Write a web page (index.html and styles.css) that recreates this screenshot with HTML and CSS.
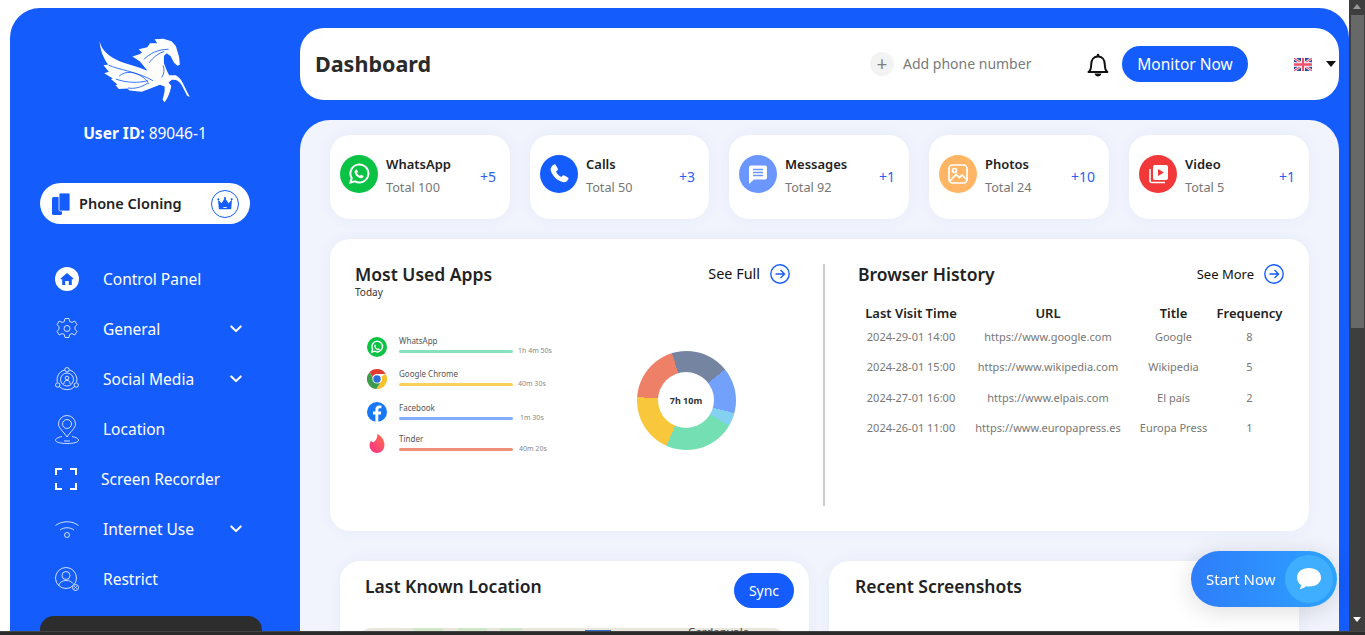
FILE: index.html
```html
<!DOCTYPE html>
<html lang="en">
<head>
<meta charset="utf-8">
<title>Dashboard</title>
<link rel="stylesheet" href="styles.css">
</head>
<body>
<div class="frame">
  <aside class="sidebar">
    <svg class="logo" viewBox="177 54 273 196" aria-label="Pegasus logo">
      <path fill="#fff" d="M178 62C184 92 205 108 240 125 275 138 305 142 335 160L360 170V195L335 205 305 216 268 212 262 206 236 208 226 196 232 194 212 178 218 176 192 160 206 156 190 136 204 134C188 112 180 90 178 62Z"/>
      <path fill="#fff" d="M277 110L300 102 306 98 296 88 322 82 330 70 352 70 344 58 370 56 395 64 408 78 413 95 418 112 420 135 413 138 402 128 392 108 380 100 372 108 372 130 382 155 388 166H408C420 172 428 185 434 200L450 232 442 228 425 195C418 183 408 178 396 180L386 188 394 198C392 215 384 235 374 248L368 240C372 225 376 212 374 200L360 195H340L320 150 300 125Z"/>
      <g fill="none" stroke="#155cfd" stroke-width="2.600" stroke-linecap="round">
        <path d="M206 136C235 150 290 155 338 182"/>
        <path d="M238 168C255 152 285 155 308 172 320 180 325 188 325 192"/>
        <path d="M228 178C260 190 295 190 322 183"/>
        <path d="M265 205C285 208 305 202 322 191"/>
        <path d="M312 118C330 100 355 88 385 88"/>
        <path d="M328 128C340 112 355 100 372 95"/>
        <path d="M366 172C373 160 374 150 370 138"/>
      </g>
    </svg>
    <p class="user"><b>User ID:</b> 89046-1</p>
    <div class="pill">
      <svg class="pill-phones" viewBox="0 0 18 22"><rect x="0" y="4" width="10" height="18" rx="1.500" fill="#155cfd"/><rect x="7" y="0" width="11" height="18" rx="1.500" fill="#155cfd" stroke="#fff" stroke-width=".8"/></svg>
      <span class="pill-text">Phone Cloning</span>
      <span class="crown"><svg viewBox="0 0 18 16"><path fill="#155cfd" d="M1 3l4 4 4-6 4 6 4-4-1 11H2z"/><circle cx="1.400" cy="2.600" r="1.200" fill="#155cfd"/><circle cx="9" cy="1.200" r="1.200" fill="#155cfd"/><circle cx="16.600" cy="2.600" r="1.200" fill="#155cfd"/><path stroke="#fff" d="M7 12h4"/></svg></span>
    </div>
    <nav class="nav">
      <a class="nav-item"><svg class="nav-icon" viewBox="0 0 24 24"><circle cx="12" cy="12" r="12" fill="#fff"/><path fill="#155cfd" d="M12 6l6.500 5.600-.9 1-.8-.6V18h-3v-4h-3.600v4h-3v-6l-.8.600-.9-1z"/></svg><span>Control Panel</span></a>
      <a class="nav-item"><svg class="nav-icon line" viewBox="0 0 24 24"><path d="M10 1.500h4l.7 3 2.300 1 2.700-1.500 2.300 3.500-2 2.300v2.400l2 2.300-2.300 3.500-2.700-1.500-2.300 1-.7 3h-4l-.7-3-2.300-1-2.700 1.500-2.300-3.500 2-2.300v-2.400l-2-2.300 2.300-3.500 2.700 1.500 2.300-1z" stroke-linejoin="round"/><circle cx="12" cy="11.500" r="3"/></svg><span>General</span><svg class="chev" viewBox="0 0 14 9"><path d="M1.500 1.500L7 7l5.500-5.500"/></svg></a>
      <a class="nav-item"><svg class="nav-icon line" viewBox="0 0 24 24"><circle cx="12" cy="12.500" r="6.500"/><circle cx="12" cy="11" r="1.800"/><path d="M8.800 17c.3-2.600 1.500-3.700 3.200-3.700s2.900 1.100 3.200 3.700"/><path d="M9.700 2.900A10 10 0 0 0 2.300 15M14.300 2.900A10 10 0 0 1 21.700 15M4.200 19.500a11 11 0 0 0 15.600 0"/><circle cx="12" cy="2.700" r="2.200"/><circle cx="2.700" cy="18" r="2.200"/><circle cx="21.300" cy="18" r="2.200"/></svg><span>Social Media</span><svg class="chev" viewBox="0 0 14 9"><path d="M1.500 1.500L7 7l5.500-5.500"/></svg></a>
      <a class="nav-item"><svg class="nav-icon tall line" viewBox="0 0 24 29"><path d="M12 22C8 16 3.500 13 3.500 9a8.500 8.500 0 0 1 17 0c0 4-4.500 7-8.500 13z"/><circle cx="12" cy="9" r="4.500"/><path d="M7 21.500C3 22.300.5 23.600.5 25.200.5 27.300 5.500 28.500 12 28.500s11.500-1.200 11.500-3.300c0-1.600-2.500-2.900-6.500-3.700M9 26h6"/></svg><span>Location</span></a>
      <a class="nav-item tight"><svg class="nav-icon rec" viewBox="0 0 22 22"><path d="M1 7V1h6M15 1h6v6M21 15v6h-6M7 21H1v-6"/></svg><span>Screen Recorder</span></a>
      <a class="nav-item"><svg class="nav-icon line" viewBox="0 0 24 24"><path d="M.5 8.500c6.500-5 16.500-5 23 0M5 13c4-3 10-3 14 0"/><circle cx="12" cy="18" r="2.500"/></svg><span>Internet Use</span><svg class="chev" viewBox="0 0 14 9"><path d="M1.500 1.500L7 7l5.500-5.500"/></svg></a>
      <a class="nav-item"><svg class="nav-icon line" viewBox="0 0 24 24"><circle cx="11" cy="11" r="10.500"/><circle cx="11" cy="8.500" r="4"/><path d="M3.500 18.500c1.500-3.500 4-5 7.500-5s5.500 1 7 3"/><circle cx="20.500" cy="20.500" r="3" fill="#155cfd"/><path d="M19.300 19.300l2.400 2.400M21.700 19.300l-2.400 2.400"/></svg><span>Restrict</span></a>
    </nav>
    <div class="dark-card"></div>
  </aside>

  <main class="main">
    <header class="topbar">
      <h1>Dashboard</h1>
      <div class="add"><span class="add-plus">+</span><span class="add-text">Add phone number</span></div>
      <svg class="bell" viewBox="0 0 22 25"><path fill="none" stroke="#111" stroke-width="2" stroke-linejoin="round" d="M1.500 20c2-1.500 2.700-3.500 2.700-7.500C4.200 7.500 7 4.500 11 4.500s6.800 3 6.800 8c0 4 .7 6 2.700 7.500z"/><path fill="#111" d="M9.700 3a1.300 1.300 0 0 1 2.600 0v2H9.700zM7.500 21.500h7c-.5 2-2 3-3.500 3s-3-1-3.500-3z"/></svg>
      <button class="monitor">Monitor Now</button>
      <svg class="flag" viewBox="0 0 18 12" preserveAspectRatio="none"><rect width="18" height="12" fill="#2a4f9e"/><path stroke="#fff" stroke-width="2.400" d="M0 0l18 12M18 0L0 12"/><path stroke="#f0506e" stroke-width="1" d="M0 0l18 12M18 0L0 12"/><path stroke="#fff" stroke-width="4" d="M9 0v12M0 6h18"/><path stroke="#f0506e" stroke-width="2.200" d="M9 0v12M0 6h18"/></svg>
      <span class="caret"></span>
    </header>

    <section class="panel">
      <div class="stats">
        <div class="stat"><span class="stat-ic green"><svg viewBox="0 0 24 24"><path fill="none" stroke="#fff" stroke-width="2" d="M3.500 20.500l1.200-4.400A9 9 0 1 1 8 19.300z"/><path fill="#fff" d="M8.800 7.700c.4-.4 1-.4 1.200.1l.8 1.700c.1.300 0 .6-.2.800l-.6.700c.6 1.300 1.700 2.300 3 2.900l.7-.8c.2-.2.500-.3.800-.2l1.700.8c.4.200.5.700.3 1.100-.6 1.200-1.900 1.700-3.100 1.400-3-.8-5.100-2.900-5.800-5.600-.3-1 .2-2.100 1.200-2.900z"/></svg></span><div class="stat-text"><b>WhatsApp</b><small>Total 100</small></div><em>+5</em></div>
        <div class="stat"><span class="stat-ic blue"><svg viewBox="0 0 24 24"><path fill="#fff" d="M7.200 2.500c.6-.3 1.300-.1 1.600.5l2 3.700c.3.500.2 1.100-.2 1.500L9 9.600c.8 2.100 3.100 4.700 5.300 5.500l1.500-1.500c.4-.4 1-.5 1.500-.2l3.600 2c.6.300.8 1 .5 1.600-1 2.400-3.300 3.900-5.800 3.100C9.800 18.400 5.600 14 3.900 9 3.100 6.300 4.800 3.600 7.200 2.500z"/></svg></span><div class="stat-text"><b>Calls</b><small>Total 50</small></div><em>+3</em></div>
        <div class="stat"><span class="stat-ic periw"><svg viewBox="0 0 24 24"><path fill="#fff" d="M5 3.500h14A2 2 0 0 1 21 5.500v10a2 2 0 0 1-2 2H8l-5 4.500v-16.500a2 2 0 0 1 2-2z"/><path stroke="#6b96fd" stroke-width="1.500" d="M7 7.500h10M7 10.500h10M7 13.500h10"/></svg></span><div class="stat-text"><b>Messages</b><small>Total 92</small></div><em>+1</em></div>
        <div class="stat"><span class="stat-ic orange"><svg viewBox="0 0 24 24" fill="none" stroke="#fff" stroke-width="1.700"><rect x="3" y="3" width="18" height="18" rx="3.500"/><circle cx="8.500" cy="8.500" r="2"/><path d="M4 19l6-6.500 3.500 3 2.500-2.500 4.500 4.500"/></svg></span><div class="stat-text"><b>Photos</b><small>Total 24</small></div><em>+10</em></div>
        <div class="stat"><span class="stat-ic red"><svg viewBox="0 0 24 24"><rect x="7" y="3" width="15" height="15" rx="2" fill="#fff"/><path fill="#f23838" d="M12 7l6 3.500-6 3.500z"/><path fill="none" stroke="#fff" stroke-width="1.600" d="M4 7v11.500a2 2 0 0 0 2 2h13"/></svg></span><div class="stat-text"><b>Video</b><small>Total 5</small></div><em>+1</em></div>
      </div>

      <div class="usage">
        <div class="apps">
          <div class="card-head">
            <div><h2>Most Used Apps</h2><p class="today">Today</p></div>
            <a class="see full"><span>See Full</span><svg viewBox="0 0 20 20"><circle cx="10" cy="10" r="9.200"/><path d="M5.500 10h9M10.500 6l4 4-4 4"/></svg></a>
          </div>
          <div class="apps-body">
            <ul class="applist">
              <li><svg viewBox="0 0 20 20"><circle cx="10" cy="10" r="10" fill="#0ac243"/><path fill="none" stroke="#fff" stroke-width="1.400" d="M4.700 15.300l.9-3.100a5.300 5.300 0 1 1 2 2z"/><path fill="#fff" d="M8 7.300l1 1.800-.6.700c.5 1 1.200 1.600 2.200 2l.7-.6 1.700 1c-.6 1-1.500 1.200-2.600.800-1.500-.6-2.500-1.600-3-3-.3-1 0-2 .6-2.700z"/></svg><div class="app-bar"><span>WhatsApp</span><i class="mint"></i></div><time>1h 4m 50s</time></li>
              <li class="chrome"><svg viewBox="0 0 20 20"><path fill="#e33b2e" d="M10 0a10 10 0 0 1 8.700 5H10a5 5 0 0 0-4.500 2.900L2.600 3.300A10 10 0 0 1 10 0z"/><path fill="#fbc02d" d="M18.700 5A10 10 0 0 1 9.300 20l3.900-6.300A5 5 0 0 0 14.300 7.500z"/><path fill="#3c9b4c" d="M2.600 3.300l3.900 7a5 5 0 0 0 6.700 3.400L9.300 20A10 10 0 0 1 2.600 3.300z"/><circle cx="10" cy="10" r="4.600" fill="#fff"/><circle cx="10" cy="10" r="3.700" fill="#2a6fdb"/></svg><div class="app-bar"><span>Google Chrome</span><i class="yellow"></i></div><time>40m 30s</time></li>
              <li class="fb"><svg viewBox="0 0 20 20"><circle cx="10" cy="10" r="10" fill="#1877f2"/><path fill="#fff" d="M11.300 20v-7.500h2.500l.5-3h-3V7.700c0-.9.400-1.500 1.600-1.500h1.500V3.600c-.6-.1-1.400-.2-2.200-.2-2.400 0-3.800 1.400-3.800 3.900v2.200H6v3h2.400V20z"/></svg><div class="app-bar"><span>Facebook</span><i class="sky"></i></div><time class="shift">1m 30s</time></li>
              <li class="tinder"><svg viewBox="0 0 20 20"><defs><linearGradient id="tg" x1="0" y1="1" x2="1" y2="0"><stop offset="0" stop-color="#fd2f8c"/><stop offset="1" stop-color="#ff6d4a"/></linearGradient></defs><path fill="url(#tg)" d="M6.500 8.300C9.300 6.400 10.500 3.500 10.300 0c3.800 1.500 7.200 6 7.200 11.200A7.700 7.700 0 0 1 10 19a7.500 7.500 0 0 1-7.500-7.600c0-2 .7-3.700 2-5 0 1 .7 1.500 2 1.900z"/></svg><div class="app-bar"><span>Tinder</span><i class="coral"></i></div><time class="shift2">40m 20s</time></li>
            </ul>
            <div class="donut"><span>7h 10m</span></div>
          </div>
        </div>
        <div class="history">
          <div class="card-head hist-head">
            <h2>Browser History</h2>
            <a class="see more"><span>See More</span><svg viewBox="0 0 20 20"><circle cx="10" cy="10" r="9.200"/><path d="M5.500 10h9M10.500 6l4 4-4 4"/></svg></a>
          </div>
          <table>
            <thead><tr><th class="c1">Last Visit Time</th><th class="c2">URL</th><th class="c3">Title</th><th class="c4">Frequency</th></tr></thead>
            <tbody>
              <tr><td>2024-29-01 14:00</td><td>https://www.google.com</td><td>Google</td><td>8</td></tr>
              <tr><td>2024-28-01 15:00</td><td>https://www.wikipedia.com</td><td>Wikipedia</td><td>5</td></tr>
              <tr><td>2024-27-01 16:00</td><td>https://www.elpais.com</td><td>El país</td><td>2</td></tr>
              <tr><td>2024-26-01 11:00</td><td>https://www.europapress.es</td><td>Europa Press</td><td>1</td></tr>
            </tbody>
          </table>
        </div>
      </div>

      <div class="lower">
        <div class="lower-card">
          <div class="lower-head"><h2>Last Known Location</h2><button class="sync">Sync</button></div>
          <div class="map"><span class="map-label">Cerdanyola</span><span class="map-pin"></span></div>
        </div>
        <div class="lower-card"><div class="lower-head"><h2>Recent Screenshots</h2></div></div>
      </div>
    </section>
  </main>
</div>

<button class="start"><span>Start Now</span><span class="start-ic"><svg viewBox="0 0 26 24"><path fill="#fff" d="M13 1c6.800 0 12 3.800 12 9.500S19.800 19.500 13 19.500c-1 0-2 0-3-.2-1.500 1.300-3.700 2.600-6.500 3 1-1.300 1.500-2.800 1.500-4.300C2.700 16.500 1 13.800 1 10.500 1 4.800 6.200 1 13 1z"/></svg></span></button>
<div class="scrollbar"><span class="arrow up"></span><span class="thumb"></span><span class="arrow down"></span></div>
<div class="window-edge"></div>
</body>
</html>
```
FILE: styles.css
```css
* { box-sizing: border-box; }
html, body { margin: 0; height: 635px; overflow: hidden; background: #fff; }
body { font-family: "Noto Sans", "Open Sans", sans-serif; color: #222; }
h1, h2, p, ul { margin: 0; padding: 0; }
.frame { display: flex; width: 1339px; height: 627px; overflow: hidden; margin: 8px 0 0 10px; background: #155cfd; border-radius: 30px 30px 0 0; }

.sidebar { width: 290px; flex: none; display: flex; flex-direction: column; color: #fff; padding-top: 30px; }
.logo { width: 91px; height: 65px; display: block; margin-left: 89px; flex: none; }
.user { margin-top: 20px; text-align: center; font-size: 15.500px; line-height: 20px; width: 270px; }
.user b { font-weight: 700; }
.pill { margin: 40px 0 0 30px; width: 210px; height: 41px; flex: none; background: #fff; border-radius: 21px; display: flex; align-items: center; padding: 0 0 0 12px; color: #222; }
.pill-phones { width: 18px; height: 22px; flex: none; }
.pill-text { margin-left: 9px; font-size: 14.500px; font-weight: 600; flex: 1; white-space: nowrap; margin-bottom: 1px; }
.crown { width: 28px; height: 28px; border: 1.500px solid #155cfd; border-radius: 50%; margin-right: 11px; display: flex; align-items: center; justify-content: center; flex: none; }
.crown svg { width: 16px; height: 14px; }
.nav { margin-top: 30px; display: flex; flex-direction: column; flex: none; }
.nav-item { height: 50px; display: flex; align-items: center; padding-left: 45px; font-size: 15.500px; position: relative; white-space: nowrap; }
.nav-item span { margin-left: 24px; margin-bottom: 1px; }
.nav-icon { width: 24px; height: 24px; flex: none; }
.nav-icon.tall { height: 29px; }
.line { fill: none; stroke: #fff; stroke-width: .8; }
.rec { width: 22px; height: 22px; fill: none; stroke: #fff; stroke-width: 2; }
.nav-item.tight span { margin-left: 24px; }
.chev { position: absolute; left: 220px; top: 21px; width: 12px; height: 8px; fill: none; stroke: #fff; stroke-width: 2.400; stroke-linecap: round; stroke-linejoin: round; }
.dark-card { margin: 12px 0 0 30px; width: 222px; height: 100px; flex: none; background: #2d2d2d; border-radius: 14px; }

.main { width: 1039px; flex: none; padding-top: 20px; }
.topbar { height: 72px; background: #fff; border-radius: 24px; display: flex; align-items: center; padding-left: 15px; position: relative; }
.topbar h1 { font-size: 21.500px; font-weight: 700; color: #2a2a2a; width: 555px; margin-bottom: 2px; }
.add { display: flex; align-items: center; gap: 9px; font-size: 14px; color: #7a7a7a; width: 217px; white-space: nowrap; }
.add-text { padding-bottom: 2px; }
.add-plus { width: 24px; height: 24px; border-radius: 50%; background: #f3f3f3; display: flex; align-items: center; justify-content: center; font-size: 19px; color: #7f7f7f; line-height: 1; }
.bell { width: 22px; height: 25px; flex: none; }
.monitor { margin-left: 13px; width: 126px; height: 36px; border: 0; border-radius: 18px; background: #155cfd; color: #fff; font: 15.500px "Noto Sans", sans-serif; padding: 0; }
.flag { width: 18px; height: 13px; margin-left: 46px; flex: none; }
.caret { margin-left: 14px; border: 5px solid transparent; border-top: 6px solid #111; border-bottom: 0; }

.panel { margin-top: 20px; height: 560px; background: #f1f4fd; border-radius: 30px 30px 0 0; padding: 15px 30px 0; }
.stats { display: flex; gap: 20px; }
.stat { flex: none; width: 180px; height: 84px; background: #fff; border-radius: 20px; display: flex; align-items: flex-start; padding: 20px 14px 0 10px; box-shadow: 0 0 16px rgba(60, 80, 160, .05); }
.stat:nth-child(2) { width: 179px; }
.stat-ic { width: 38px; height: 38px; border-radius: 50%; display: flex; align-items: center; justify-content: center; flex: none; }
.stat-ic svg { width: 24px; height: 24px; }
.green { background: #0ac243; }
.blue { background: #155cfd; }
.periw { background: #6b96fd; }
.orange { background: #ffb564; }
.red { background: #f23838; }
.stat-text { margin-left: 8px; flex: 1; display: flex; flex-direction: column; gap: 5px; }
.stat-text b { font-size: 13px; font-weight: 600; line-height: 18px; color: #222; }
.stat-text small { font-size: 12.700px; line-height: 18px; color: #777; }
.stat em { font-style: normal; font-size: 14px; line-height: 18px; color: #2a5ff5; margin-top: 13px; }

.usage { margin-top: 20px; height: 292px; background: #fff; border-radius: 20px; display: flex; padding: 24px 25px 25px; box-shadow: 0 0 16px rgba(60, 80, 160, .05); }
.apps { width: 470px; flex: none; border-right: 2px solid #ccc; padding-right: 33px; margin-top: 1px; }
.apps .card-head { margin-top: -1px; }
.history { flex: 1; padding-left: 33px; }
.card-head { display: flex; justify-content: space-between; }
h2 { font-size: 17.500px; font-weight: 600; line-height: 22px; color: #222; }
.today { font-size: 10px; line-height: 12px; color: #333; margin-top: 1px; }
.see { display: flex; align-items: center; gap: 10px; height: 22px; color: #111; }
.see.full { font-size: 14.400px; }
.see.more { font-size: 13px; }
.see span { margin-bottom: 1px; }
.see svg { width: 20px; height: 20px; fill: none; stroke: #155cfd; stroke-width: 1.400; }
.apps-body { display: flex; margin-top: 37px; padding-left: 12px; }
.applist { list-style: none; width: 269.500px; flex: none; }
.applist li { display: flex; align-items: flex-start; height: 33.400px; position: relative; }
.applist li.tinder { margin-top: -2px; }
.applist li > svg { width: 20px; height: 20px; flex: none; margin-top: 2px; }
.applist li.chrome > svg { margin-top: 1px; }
.applist li.fb > svg { margin-top: 0; }
.applist li.tinder > svg { margin-top: 1px; }
.app-bar { margin-left: 12px; width: 114px; flex: none; font-size: 8px; line-height: 12px; color: #555; }
.app-bar span { display: block; }
.app-bar i { display: block; height: 3px; margin-top: 3px; border-radius: 1.500px; }
.mint { background: #86e2bd; }
.yellow { background: #fad05a; }
.sky { background: #83adfb; }
.coral { background: #f09079; }
.applist time { font-size: 7px; color: #888; margin: 11px 0 0 5px; white-space: nowrap; }
.applist time.shift { margin-left: 7px; }
.applist time.shift2 { margin-left: 6px; }
.donut { width: 99px; height: 99px; border-radius: 50%; margin-top: 15.500px; position: relative; background: conic-gradient(from -17deg, #7585a1 0 68deg, #72a1fb 68deg 122deg, #84d0f0 122deg 137.500deg, #75dfb4 137.500deg 221deg, #f9c73c 221deg 291deg, #ee8068 291deg 360deg); display: flex; align-items: center; justify-content: center; }
.donut span { width: 56px; height: 56px; background: #fff; border-radius: 50%; display: flex; align-items: center; justify-content: center; font-size: 9px; font-weight: 700; color: #333; }

.hist-head { margin-bottom: 20px; }
table { border-collapse: collapse; table-layout: fixed; width: 426px; }
th { font-size: 13px; font-weight: 600; color: #222; line-height: 16.400px; padding: 0; white-space: nowrap; }
td { font-size: 11px; color: #777; text-align: center; height: 30.400px; padding: 0; white-space: nowrap; }
.c1 { width: 106px; }
.c2 { width: 168px; }
.c3 { width: 83px; }
.c4 { width: 69px; }

.lower { display: flex; gap: 20px; margin: 30px 10px 0; }
.lower-card { flex: none; width: 470px; height: 200px; background: #fff; border-radius: 20px; padding: 0 15px 0 26px; box-shadow: 0 0 16px rgba(60, 80, 160, .05); }
.lower-card:first-child { width: 469px; padding-left: 25px; }
.lower-head { display: flex; justify-content: space-between; height: 67px; padding-top: 14px; }
.lower-head h2 { line-height: 22px; }
.sync { width: 60px; height: 35px; margin-top: -2px; border: 0; border-radius: 18px; background: #155cfd; color: #fff; font: 14px "Noto Sans", sans-serif; padding: 0; }
.map { height: 120px; margin: 0 0 0 -5px; width: 424px; border-radius: 10px; position: relative; overflow: hidden; background: linear-gradient(90deg, #e9e6dd 0 53px, #cfe6c8 53px 83px, #e9e6dd 83px 98px, #cfe6c8 98px 127px, #e9e6dd 127px 140px, #cfe6c8 140px 162px, #e9e6dd 162px 424px); }
.map-label { position: absolute; left: 328px; top: -2px; font-size: 11.500px; line-height: 12px; color: #444; }
.map-pin { position: absolute; left: 225px; top: 2px; width: 26px; height: 10px; background: #2a6fdb; }

.start { position: fixed; left: 1191px; top: 551px; width: 146px; height: 56px; border: 0; border-radius: 28px; background: linear-gradient(90deg, #2f7dfb, #2da2ff); color: #fff; font: 15px "Noto Sans", sans-serif; display: flex; align-items: center; padding: 0 4px 0 15px; justify-content: space-between; box-shadow: 0 4px 24px rgba(0, 0, 0, .14); }
.start-ic { width: 48px; height: 48px; border-radius: 50%; background: #40aeff; display: flex; align-items: center; justify-content: center; }
.start-ic svg { width: 26px; height: 24px; }

.scrollbar { position: fixed; left: 1349px; top: 0; width: 16px; height: 635px; background: #3e3e3e; }
.thumb { position: absolute; left: 2px; top: 15px; width: 13px; height: 313px; background: #686868; }
.arrow { position: absolute; left: 4px; border: 4.500px solid transparent; }
.arrow.up { top: 4px; border-bottom: 5px solid #999; border-top: 0; }
.arrow.down { bottom: 13px; border-top: 5px solid #fff; border-bottom: 0; }
.window-edge { position: fixed; left: 0; top: 631px; width: 1365px; height: 4px; background: #2b2b2b; border-top: 1px solid #444; }
```
